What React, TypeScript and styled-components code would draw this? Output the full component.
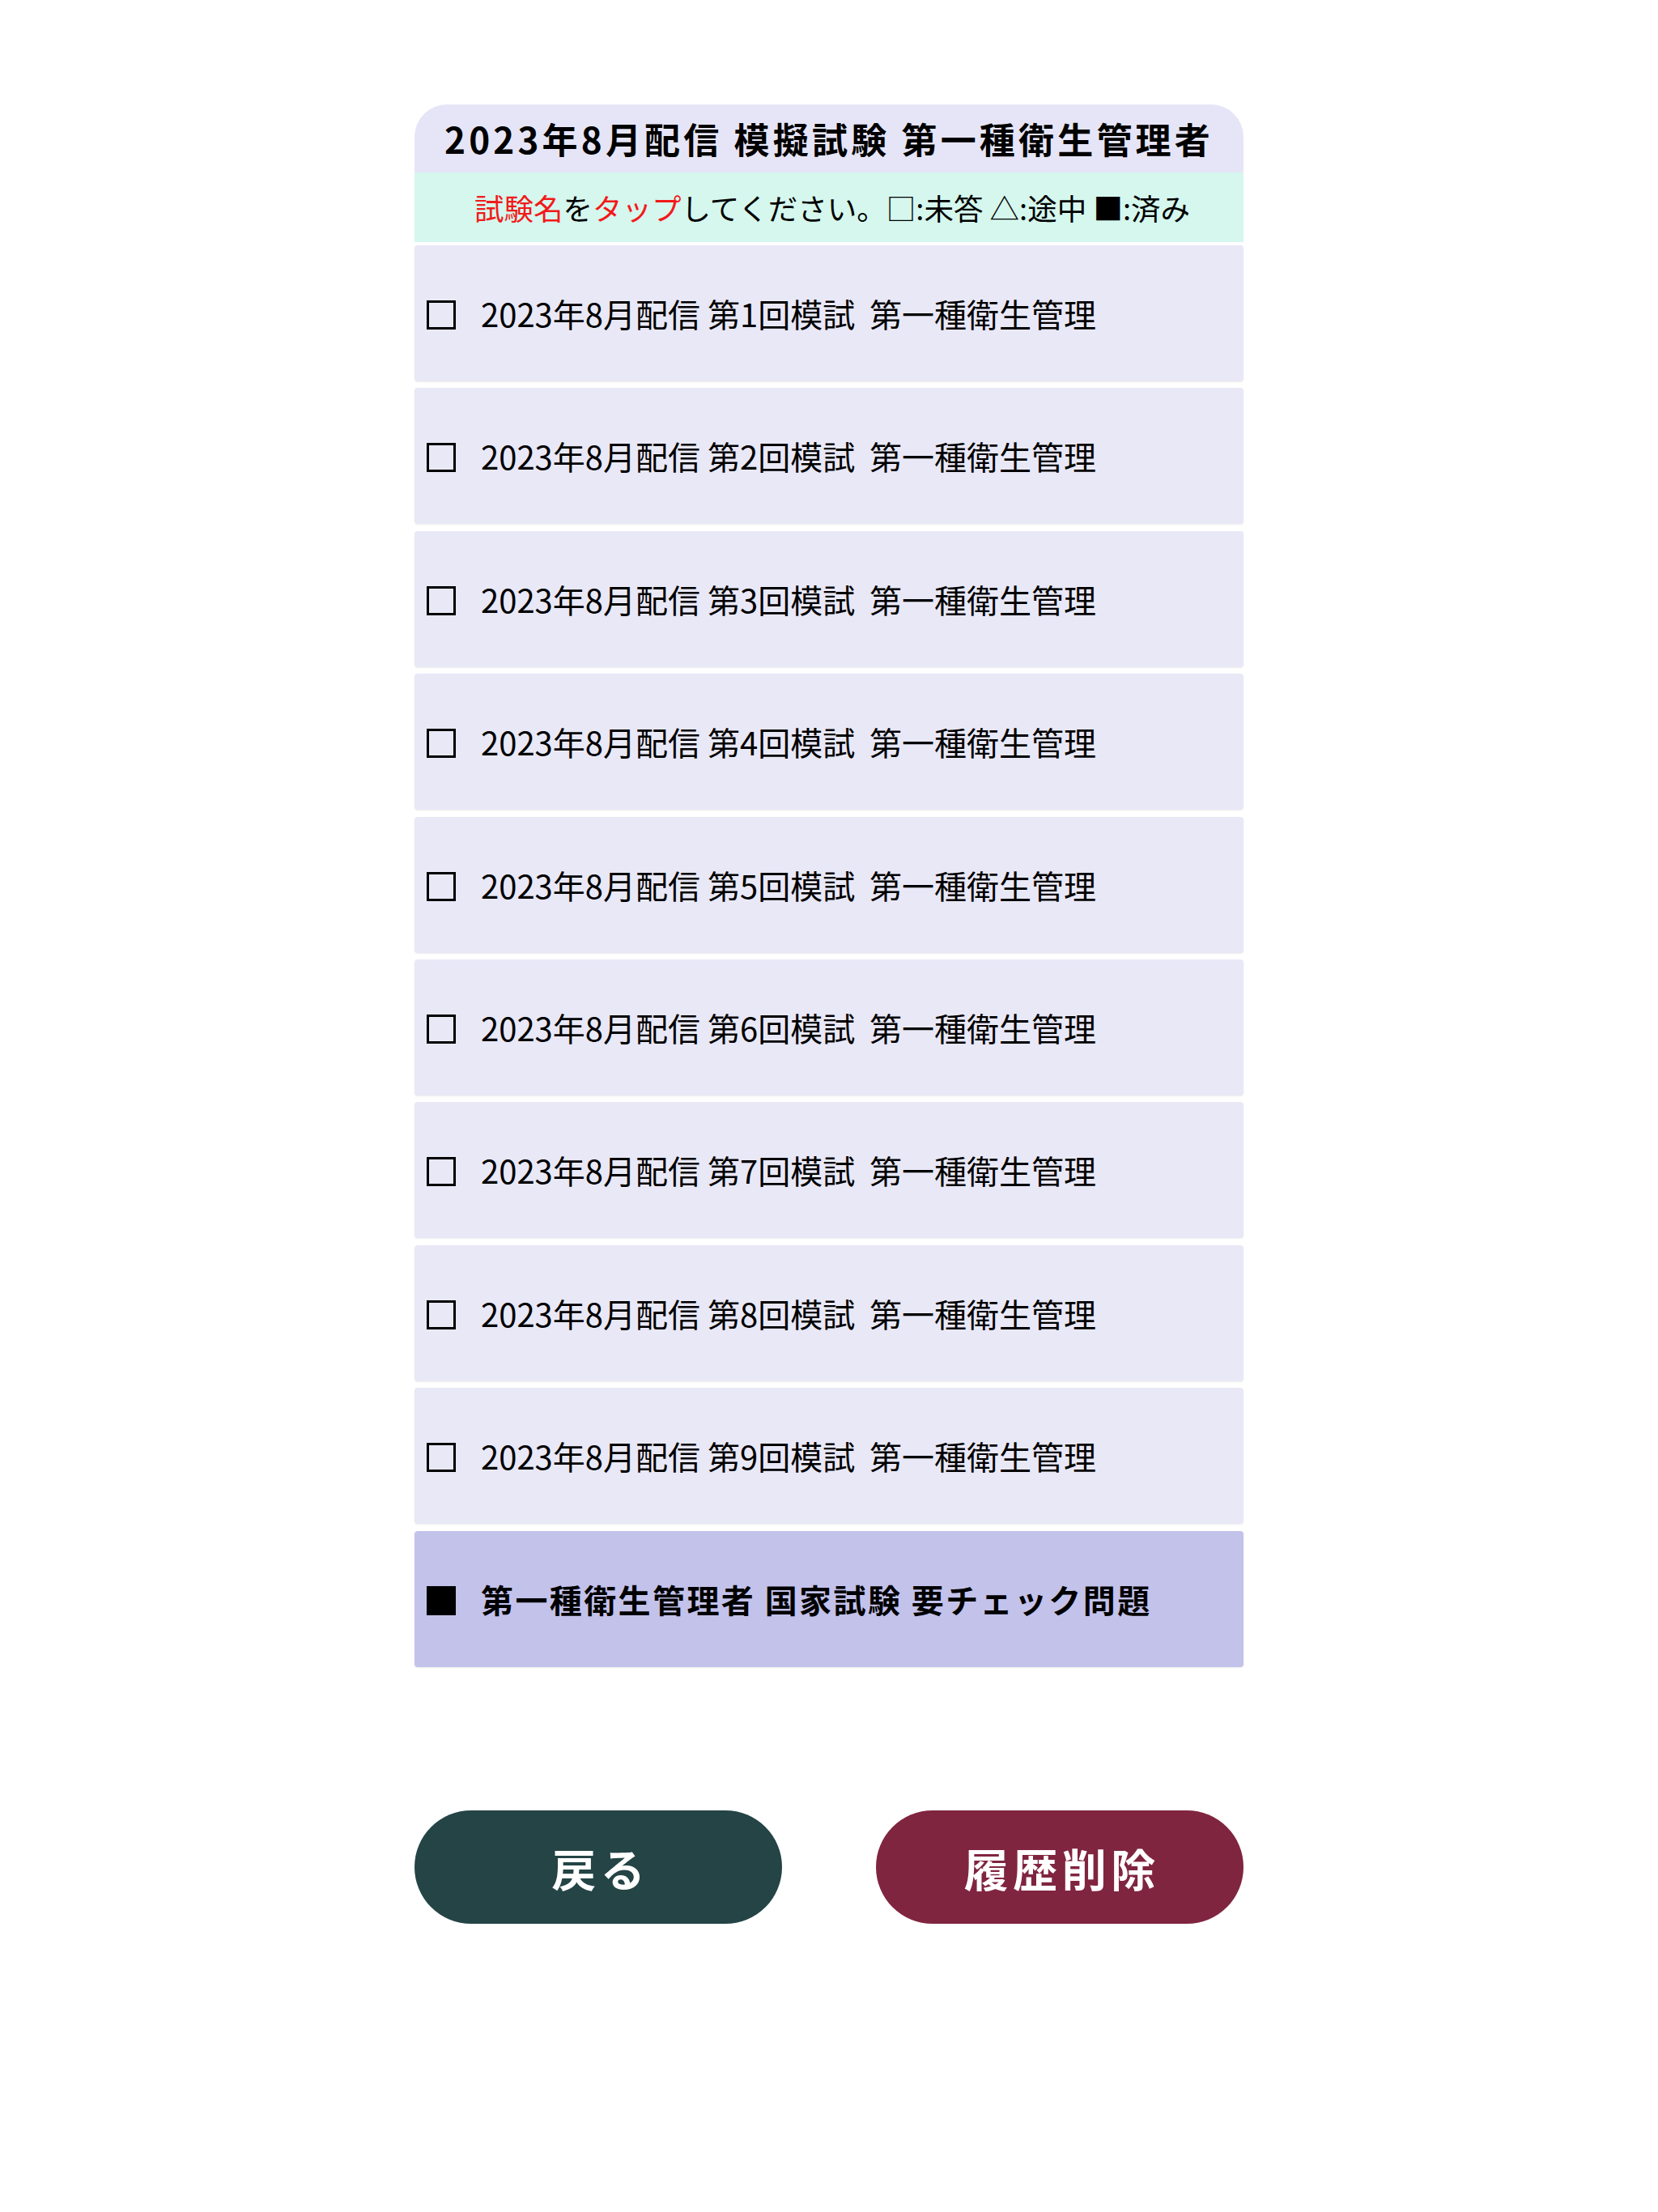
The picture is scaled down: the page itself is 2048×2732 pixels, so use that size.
import React from "react";
import styled, { createGlobalStyle } from "styled-components";

const GlobalStyle = createGlobalStyle`
  html, body {
    margin: 0;
    padding: 0;
    background: #ffffff;
  }
  body {
    font-family: "Noto Sans CJK JP", "Noto Sans", sans-serif;
    color: #000;
  }
`;

const Page = styled.div`
  width: 1024px;
  margin: 129px auto 0;
  display: flex;
  flex-direction: column;
`;

const Header = styled.div`
  height: 84px;
  background: #e6e5f7;
  border-radius: 40px 40px 0 0;
  display: flex;
  align-items: center;
  justify-content: center;
  font-size: 44px;
  font-weight: 700;
  letter-spacing: 0.095em;
  white-space: pre;
`;

const Notice = styled.div`
  height: 86px;
  box-sizing: border-box;
  padding-left: 8px;
  background: #d5f7ee;
  display: flex;
  align-items: center;
  justify-content: center;
  font-size: 36.5px;
  white-space: pre;
`;

const Red = styled.span`
  color: #f21a1a;
`;

const List = styled.div`
  margin-top: 4px;
  display: flex;
  flex-direction: column;
  gap: 8.4px;
`;

const Row = styled.div<{ $strong?: boolean }>`
  height: 168px;
  box-sizing: border-box;
  padding-left: 15px;
  border-radius: 4px;
  background: ${(p) => (p.$strong ? "#c3c2eb" : "#e9e8f7")};
  box-shadow: 0 1px 2px rgba(0, 0, 0, 0.08);
  display: flex;
  align-items: center;
  gap: 31px;
  font-size: 40px;
  font-weight: ${(p) => (p.$strong ? 700 : 400)};
  letter-spacing: ${(p) => (p.$strong ? "0.06em" : "0")};
  white-space: pre;
`;

const Mark = styled.span<{ $filled?: boolean }>`
  width: 36px;
  height: 36px;
  box-sizing: border-box;
  flex: none;
  margin-top: 4px;
  border: 3.5px solid #000;
  background: ${(p) => (p.$filled ? "#000" : "transparent")};
`;

const Buttons = styled.div`
  margin-top: 177px;
  display: flex;
  justify-content: space-between;
`;

const Button = styled.button<{ $tone: "back" | "danger" }>`
  width: 454px;
  height: 140px;
  border: none;
  border-radius: 70px;
  background: ${(p) => (p.$tone === "back" ? "#244446" : "#80253f")};
  color: #ffffff;
  font-family: "Noto Sans CJK JP", "Noto Sans", sans-serif;
  font-size: 55px;
  font-weight: 700;
  letter-spacing: 0.1em;
  padding: 0 0 0 0.1em;
  display: flex;
  align-items: center;
  justify-content: center;
  cursor: pointer;
`;

const exams = [1, 2, 3, 4, 5, 6, 7, 8, 9];

export default function App() {
  return (
    <>
      <GlobalStyle />
      <Page>
        <Header>2023年8月配信 模擬試験 第一種衛生管理者</Header>
        <Notice>
          <Red>試験名</Red>を<Red>タップ</Red>してください。□:未答 △:途中 ■:済み
        </Notice>
        <List>
          {exams.map((n) => (
            <Row key={n}>
              <Mark />
              {`2023年8月配信 第${n}回模試  第一種衛生管理`}
            </Row>
          ))}
          <Row $strong>
            <Mark $filled />
            第一種衛生管理者 国家試験 要チェック問題
          </Row>
        </List>
        <Buttons>
          <Button $tone="back">戻る</Button>
          <Button $tone="danger">履歴削除</Button>
        </Buttons>
      </Page>
    </>
  );
}
